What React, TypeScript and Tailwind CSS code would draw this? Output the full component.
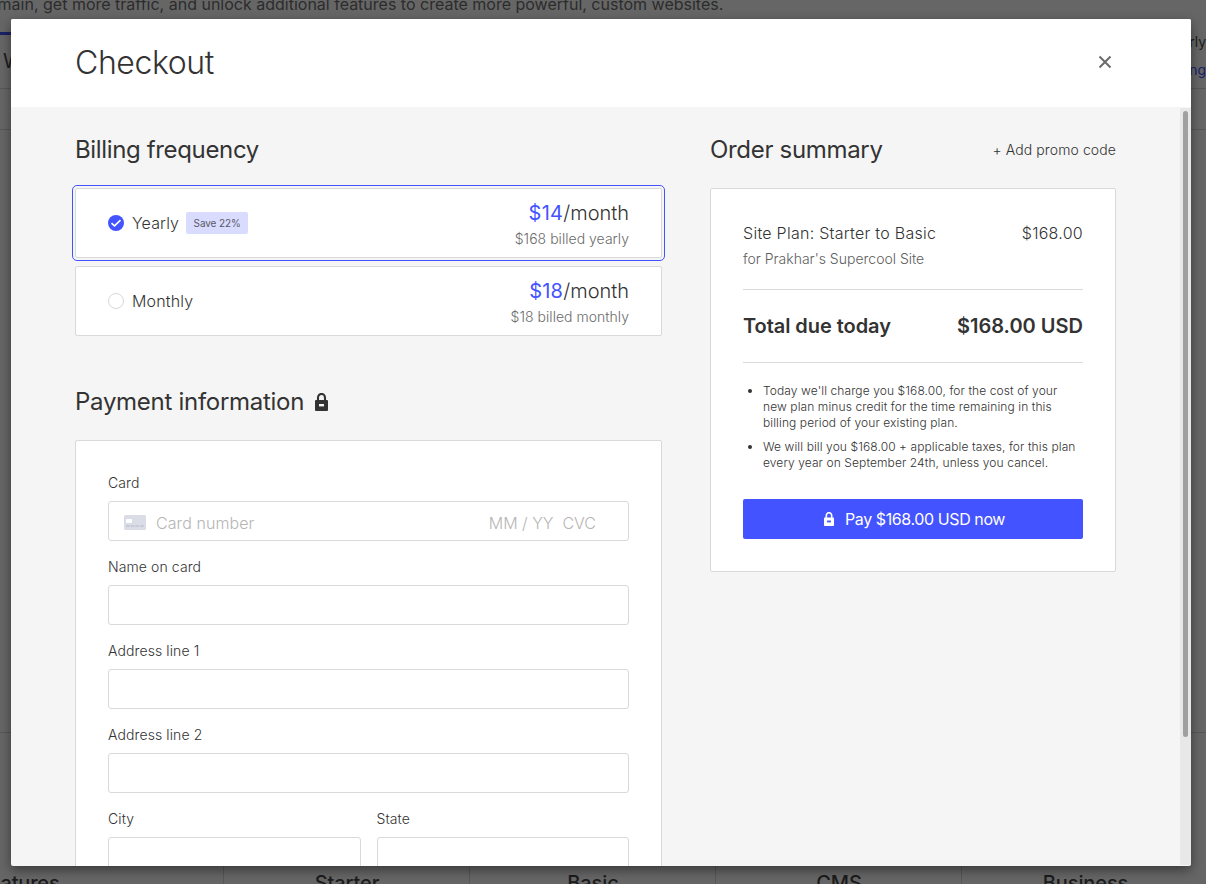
import React from "react";

function Lock({ className, hole }: { className: string; hole: string }) {
  return (
    <svg viewBox="0 0 13 18" className={className} fill="none">
      <path d="M3 8V4.4a3.5 3.5 0 0 1 7 0V8" stroke="currentColor" strokeWidth="2.1" />
      <rect x="0" y="7" width="13" height="11" rx="1" fill="currentColor" />
      <rect x="4" y="11" width="5" height="2.4" fill={hole} />
    </svg>
  );
}

function Plan({ name, price, note, selected, badge }: { name: string; price: string; note: string; selected?: boolean; badge?: string }) {
  return (
    <div
      className={
        selected
          ? "flex h-[70px] items-center justify-between rounded-xs border border-[#d9d9d9] bg-white px-8 outline outline-offset-2 outline-[#4353ff]"
          : "flex h-[70px] items-center justify-between rounded-xs border border-[#d9d9d9] bg-white px-8"
      }
    >
      <div className="flex items-center">
        {selected ? (
          <svg viewBox="0 0 16 16" className="size-4">
            <circle cx="8" cy="8" r="8" fill="#4353ff" />
            <path d="M3.5 8.2l3 2.6 6-5.6" stroke="#fff" strokeWidth="1.6" fill="none" />
          </svg>
        ) : (
          <span className="size-4 rounded-full border border-[#d9d9d9]" />
        )}
        <span className="ml-2 text-base leading-6 tracking-[0.15px]">{name}</span>
        {badge && (
          <span className="ml-[7px] flex h-[22px] w-[62px] items-center justify-center rounded-xs bg-[#d9dcff] text-[10px] font-normal tracking-[-0.1px] text-[#5a5a66]">
            {badge}
          </span>
        )}
      </div>
      <div className="flex flex-col items-end pt-1">
        <div className="text-xl leading-6">
          <span className="font-normal tracking-[0.25px] text-[#4353ff]">{price}</span>/month
        </div>
        <div className="mt-1 text-sm leading-5 tracking-[0.03px] text-[#6b6b6b]">{note}</div>
      </div>
    </div>
  );
}

function Field({ label, children }: { label: string; children?: React.ReactNode }) {
  return (
    <div className="min-w-0 flex-1">
      <div className="text-sm leading-5 tracking-[0.1px]">{label}</div>
      <div className="mt-2 flex h-10 items-center rounded-[3px] border border-[#d9d9d9]">{children}</div>
    </div>
  );
}

function Backdrop() {
  return (
    <div className="flex h-[884px] w-[1206px] flex-col overflow-hidden bg-[#666] text-[#1c1c1c]">
      <div className="-mt-[7px] -ml-[12px] h-[33px] shrink-0 text-base leading-[22px] whitespace-nowrap text-[#2c2c2c]">
        omain, get more traffic, and unlock additional features to create more powerful, custom websites.
      </div>
      <div className="mt-[6px] h-[3px] w-40 shrink-0 bg-[#1b2166]" />
      <div className="flex h-[54px] shrink-0 justify-between border-b border-[#575757]">
        <div className="pt-[14px] pl-[3px] text-xl leading-6">W</div>
        <div className="-mt-[7px] w-[120px] text-right text-sm leading-7">
          <div>Yearly</div>
          <div className="text-[#1b2166]">Billing</div>
        </div>
      </div>
      <div className="h-[41px] shrink-0 border-b border-[#575757]" />
      <div className="h-[603px] shrink-0 border-b border-[#575757]" />
      <div className="-ml-[22px] grid w-[1230px] flex-1 grid-cols-5 divide-x divide-[#575757]">
        {["Features", "Starter", "Basic", "CMS", "Business"].map((name) => (
          <div
            key={name}
            className={
              name === "Features"
                ? "h-[151px] pt-[136px] text-xl leading-7 font-medium tracking-[-0.2px]"
                : "h-[151px] pt-[136px] pl-px text-center text-xl leading-7 font-medium tracking-[-0.1px]"
            }
          >
            {name}
          </div>
        ))}
      </div>
    </div>
  );
}

export default function App() {
  return (
    <div className="relative h-[884px] w-[1206px] overflow-hidden font-['Inter',sans-serif] text-[#333]">
      <Backdrop />
      <div className="absolute top-[19px] left-[11px] flex h-[847px] w-[1180px] flex-col overflow-hidden rounded-xs bg-[#f5f5f5] font-light shadow-[0_4px_12px_rgba(0,0,0,0.45)]">
        <header className="flex h-[88px] shrink-0 items-center justify-between bg-white pr-[79px] pl-16">
          <h1 className="text-[32px] leading-10 tracking-[-0.4px]">Checkout</h1>
          <svg viewBox="0 0 14 14" className="-mt-[2px] size-[14px]">
            <path d="M1.5 1.5l11 11m0-11l-11 11" stroke="#6b6b6b" strokeWidth="2" />
          </svg>
        </header>
        <div className="flex min-h-0 flex-1">
          <main className="flex flex-1 gap-12 overflow-hidden px-16 pt-[27px]">
            <div className="w-[587px] shrink-0">
              <h2 className="text-2xl leading-8 font-normal tracking-[-0.35px]">Billing frequency</h2>
              <div className="mt-[22px] flex flex-col gap-2">
                <Plan name="Yearly" price="$14" note="$168 billed yearly" badge="Save 22%" selected />
                <Plan name="Monthly" price="$18" note="$18 billed monthly" />
              </div>
              <h2 className="mt-[50px] flex items-center text-2xl leading-8 font-normal tracking-[-0.28px]">
                Payment information
                <Lock className="ml-[11px] h-[18px] w-[13px]" hole="#f5f5f5" />
              </h2>
              <div className="mt-[22px] flex flex-col gap-4 rounded-xs border border-[#d9d9d9] bg-white px-8 py-8">
                <Field label="Card">
                  <svg viewBox="0 0 22 15" className="ml-[15px] h-[15px] w-[22px] translate-y-px">
                    <rect width="22" height="15" rx="1.5" fill="#dadde6" />
                    <rect x="2" y="4" width="6" height="4" rx="1" fill="#fff" />
                    <path d="M2 11h18" stroke="#b4b9c8" strokeDasharray="3.7 1" />
                  </svg>
                  <div className="ml-[10px] flex flex-1 pt-1 text-base leading-6 text-[#b5b5b5]">
                    <span className="flex-1 tracking-[0.08px]">Card number</span>
                    <span>MM / YY</span>
                    <span className="mr-8 ml-[9px]">CVC</span>
                  </div>
                </Field>
                <Field label="Name on card" />
                <Field label="Address line 1" />
                <Field label="Address line 2" />
                <div className="flex gap-4">
                  <Field label="City" />
                  <Field label="State" />
                </div>
              </div>
            </div>
            <div className="w-[406px] shrink-0">
              <div className="flex items-center justify-between">
                <h2 className="text-2xl leading-8 font-normal tracking-[-0.32px]">Order summary</h2>
                <span className="text-sm tracking-[0.1px]">+ Add promo code</span>
              </div>
              <div className="mt-[22px] h-[384px] rounded-xs border border-[#d9d9d9] bg-white p-8">
                <div className="flex justify-between text-base leading-6 tracking-[0.27px]">
                  <span>Site Plan: Starter to Basic</span>
                  <span>$168.00</span>
                </div>
                <div className="mt-1 text-sm leading-5 text-[#606060]">for Prakhar's Supercool Site</div>
                <div className="mt-5 flex h-[74px] items-center justify-between border-y border-[#d9d9d9] text-xl font-semibold">
                  <span className="tracking-[-0.06px]">Total due today</span>
                  <span>$168.00 USD</span>
                </div>
                <ul className="mt-5 flex list-disc flex-col gap-2 pl-5 text-xs leading-4 tracking-[0.095px]">
                  <li>
                    Today we'll charge you $168.00, for the cost of your
                    <br />
                    new plan minus credit for the time remaining in this
                    <br />
                    billing period of your existing plan.
                  </li>
                  <li>
                    We will bill you $168.00 + applicable taxes, for this plan
                    <br />
                    every year on September 24th, unless you cancel.
                  </li>
                </ul>
                <button className="mt-7 flex h-10 w-full items-center justify-center rounded-xs bg-[#4353ff] pl-[3px] text-base font-normal tracking-[-0.4px] text-white">
                  <Lock className="mr-[11px] h-[14px] w-[10px]" hole="#4353ff" />
                  Pay $168.00 USD now
                </button>
              </div>
            </div>
          </main>
          <div className="my-px w-[11px] shrink-0 bg-[#e8e8e8] px-[3px] pt-[3px]">
            <div className="h-[626px] w-[5px] rounded-full bg-[#a0a0a0]" />
          </div>
        </div>
      </div>
    </div>
  );
}
